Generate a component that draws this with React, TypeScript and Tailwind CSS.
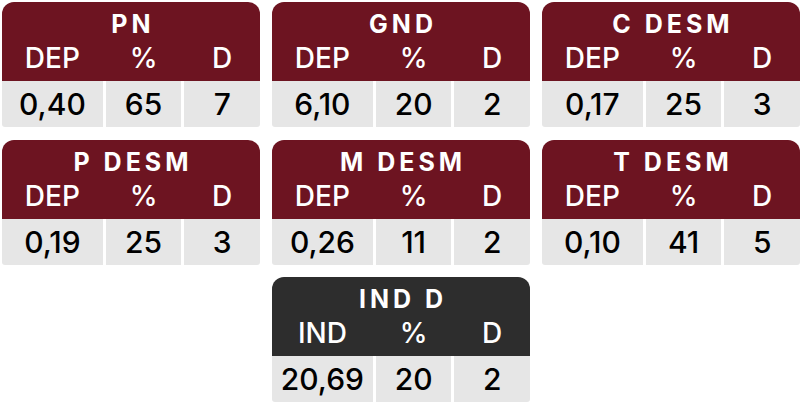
import React from 'react';

interface Stat {
  title: string;
  label: string;
  value: string;
  pct: string;
  d: string;
  dark?: boolean;
}

const stats: (Stat | null)[] = [
  { title: 'PN', label: 'DEP', value: '0,40', pct: '65', d: '7' },
  { title: 'GND', label: 'DEP', value: '6,10', pct: '20', d: '2' },
  { title: 'C DESM', label: 'DEP', value: '0,17', pct: '25', d: '3' },
  { title: 'P DESM', label: 'DEP', value: '0,19', pct: '25', d: '3' },
  { title: 'M DESM', label: 'DEP', value: '0,26', pct: '11', d: '2' },
  { title: 'T DESM', label: 'DEP', value: '0,10', pct: '41', d: '5' },
  null,
  { title: 'IND D', label: 'IND', value: '20,69', pct: '20', d: '2', dark: true },
  null,
];

const StatCard: React.FC<{ stat: Stat }> = ({ stat }) => {
  const head = stat.dark ? 'bg-[#2d2d2d]' : 'bg-[#6d1421]';
  return (
    <div className="w-[258px] h-[125px] flex flex-col">
      <div className={`${head} h-[79px] rounded-t-[12px] pt-[7px] text-white flex flex-col`}>
        <div className="text-center text-[25px] leading-[30px] font-bold tracking-[4px] pl-[4px] whitespace-pre">
          {stat.title}
        </div>
        <div className="grid grid-cols-[4fr_3fr_3fr] gap-x-[3px] mt-[3px] text-[28px] leading-[32px] font-medium text-center">
          <span>{stat.label}</span>
          <span>%</span>
          <span>D</span>
        </div>
      </div>
      <div className="grid grid-cols-[4fr_3fr_3fr] gap-x-[3px] h-[46px] text-[30px] leading-[46px] font-medium text-center text-black">
        <span className="bg-[#e6e6e6] rounded-bl-[3px]">{stat.value}</span>
        <span className="bg-[#e6e6e6]">{stat.pct}</span>
        <span className="bg-[#e6e6e6] rounded-br-[3px]">{stat.d}</span>
      </div>
    </div>
  );
};

export default function App() {
  return (
    <div
      className="w-[800px] h-[416px] bg-white pl-[2px] pt-[2px] overflow-hidden"
      style={{ fontFamily: 'Inter, "Liberation Sans", sans-serif' }}
    >
      <div className="grid grid-cols-[258px_258px_258px] gap-x-[12px] gap-y-[12.5px]">
        {stats.map((s, i) => (s ? <StatCard key={i} stat={s} /> : <div key={i} />))}
      </div>
    </div>
  );
}
